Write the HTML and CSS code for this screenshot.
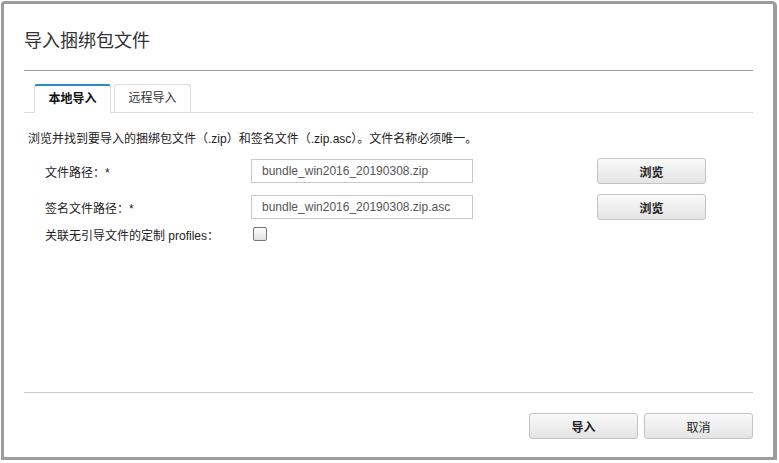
FILE: index.html
```html
<!DOCTYPE html>
<html lang="zh-CN">
<head>
<meta charset="UTF-8" />
<title>导入捆绑包文件</title>
<link rel="stylesheet" href="styles.css">
</head>
<body>

<div class="dialog">
  <h1 class="title">导入捆绑包文件</h1>

  <div class="tabs">
    <span class="tab active">本地导入</span>
    <span class="tab">远程导入</span>
  </div>

  <div class="panel">
    <p class="hint">浏览并找到要导入的捆绑包文件（.zip）和签名文件（.zip.asc）。文件名称必须唯一。</p>

    <div class="row">
      <label class="label">文件路径：*</label>
      <input class="path" type="text" value="bundle_win2016_20190308.zip" />
      <button class="btn browse">浏览</button>
    </div>
    <div class="row">
      <label class="label">签名文件路径：*</label>
      <input class="path" type="text" value="bundle_win2016_20190308.zip.asc" />
      <button class="btn browse">浏览</button>
    </div>
    <div class="row check-row">
      <label class="label">关联无引导文件的定制 profiles：</label>
      <span class="checkbox"></span>
    </div>
  </div>

  <div class="footer">
    <button class="btn">导入</button>
    <button class="btn plain">取消</button>
  </div>
</div>

</body>
</html>
```

FILE: styles.css
```css
html, body { margin: 0; padding: 0; background: #fff; }
body { font-family: "Liberation Sans", Arial, "Noto Sans CJK SC", sans-serif; color: #222; }

.dialog {
  margin: 1px 0 0 1px; width: 729px; height: 453px;
  border: 3px solid #9c9c9c; border-radius: 4px 4px 0 0;
  box-shadow: 1px 1px 0 #9c9c9c;
  background: #fff; padding: 0 20px;
  display: flex; flex-direction: column;
}

.title {
  margin: 0; padding: 22px 0 0 0; height: 44px;
  font-size: 18px; font-weight: normal; color: #333;
  border-bottom: 1px solid #999;
}

.tabs {
  display: flex; gap: 3px; padding: 13px 0 0 10px;
  border-bottom: 1px solid #ddd;
}
.tab {
  width: 75px; height: 27px; line-height: 27px; text-align: center;
  font-size: 12px; border: 1px solid #ddd; border-bottom: none;
  border-radius: 3px 3px 0 0; color: #333; background: #fff;
}
.tab.active { border-top: 2px solid #2a8cc4; font-weight: bold; color: #111; margin-bottom: -1px; }

.panel { padding: 0 0 0 4px; flex: 1; }
.hint { margin: 16px 0 12px; font-size: 12px; color: #222; }

.row { display: flex; align-items: center; height: 26px; margin-bottom: 10px; }
.label { width: 206px; padding-left: 17px; font-size: 12px; color: #222; }
.path {
  width: 222px; height: 24px; box-sizing: border-box; margin: 0;
  border: 1px solid #c8c8c8; padding: 0 10px;
  font-family: inherit; font-size: 12px; color: #555;
}
.btn {
  width: 109px; height: 26px; margin: 0; padding: 0;
  border: 1px solid #c4c4c4; border-radius: 3px;
  background: linear-gradient(#f9f9f9, #e4e4e4);
  font-family: inherit; font-size: 12px; font-weight: bold; color: #222;
}
.btn.plain { font-weight: normal; }
.browse { margin-left: 124px; }

.check-row { height: 14px; margin-top: -3px; }
.checkbox {
  width: 12px; height: 12px; margin-left: 2px;
  border: 1px solid #777; border-radius: 2px;
  background: linear-gradient(#fdfdfd, #e2e2e2);
}

.footer {
  border-top: 1px solid #ccc; height: 44px;
  display: flex; justify-content: flex-end; align-items: flex-start; gap: 6px;
  padding-top: 20px;
}
```
